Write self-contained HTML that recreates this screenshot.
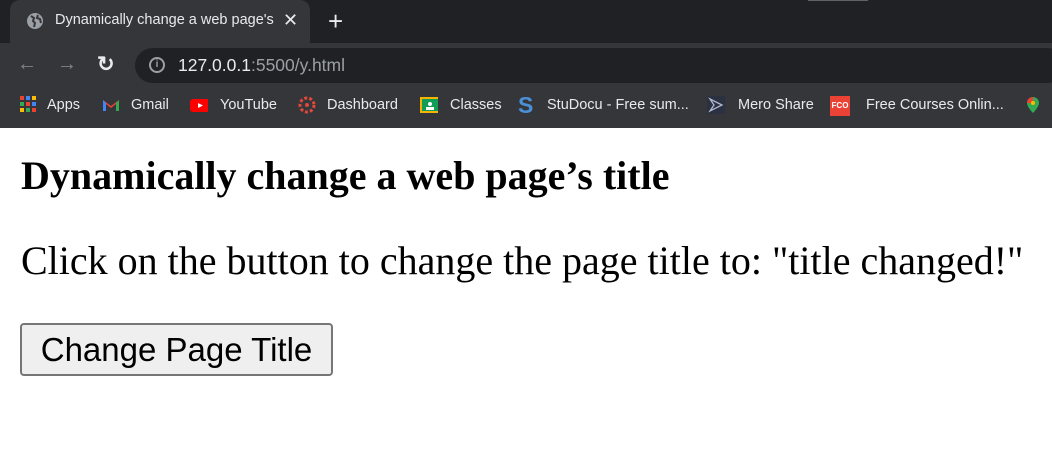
<!DOCTYPE html>
<html><head><meta charset="utf-8"><style>
*{margin:0;padding:0;box-sizing:border-box}
body{width:1052px;height:462px;overflow:hidden;background:#fff;font-family:"Liberation Sans",sans-serif;position:relative}
.top{position:absolute;left:0;top:0;width:1052px;height:43px;background:#202124}
.tab{position:absolute;left:10px;top:0;width:300px;height:43px;background:#35363a;border-radius:10px 10px 0 0}
.tabt{position:absolute;left:55px;top:12px;color:#e8eaed;font-size:14.5px;white-space:nowrap;width:222px;overflow:hidden}
.bar{position:absolute;left:0;top:43px;width:1052px;height:85px;background:#35363a}
.omni{position:absolute;left:135px;top:48px;width:930px;height:35px;background:#202124;border-radius:18px}
.url{position:absolute;left:178px;top:55px;font-size:17.5px;color:#e8eaed}
.url span{color:#9aa0a6}
.bm{position:absolute;top:97px;color:#e8eaed;font-size:14.5px;white-space:nowrap}
.ic{position:absolute;top:96px;width:18px;height:18px}
h1{position:absolute;left:21px;top:152px;font-family:"Liberation Serif",serif;font-size:40px;font-weight:bold;white-space:nowrap;color:#000}
p{position:absolute;left:21px;top:237px;font-family:"Liberation Serif",serif;font-size:40px;white-space:nowrap;color:#000}
button{position:absolute;left:20px;top:323px;width:313px;height:53px;background:#efefef;border:2px solid #767676;border-radius:4px;font-family:"Liberation Sans",sans-serif;font-size:33px;color:#000}
</style></head><body>
<div class="top"></div>
<div class="tab"></div>
<svg style="position:absolute;left:26px;top:12px" width="18" height="18" viewBox="0 0 18 18"><circle cx="9" cy="9" r="8" fill="#9aa0a6"/><path d="M5 4l3 2-1 3 2 2-1 4M12 3l-1 3 3 1 1 4" stroke="#35363a" stroke-width="2" fill="none"/></svg>
<div class="tabt">Dynamically change a web page's title</div>
<div style="position:absolute;left:283px;top:10px;color:#e8eaed;font-size:18px">✕</div>
<div style="position:absolute;left:328px;top:6px;color:#e8eaed;font-size:26px;font-weight:300">+</div>
<div style="position:absolute;left:808px;top:0;width:60px;height:1px;background:#5f6368"></div>
<div class="bar"></div>
<div class="omni"></div>
<div style="position:absolute;left:17px;top:53px;color:#80868b;font-size:20px">←</div>
<div style="position:absolute;left:57px;top:53px;color:#80868b;font-size:20px">→</div>
<div style="position:absolute;left:97px;top:52px;color:#e8eaed;font-size:21px;font-weight:bold">↻</div>
<div style="position:absolute;left:149px;top:57px;width:16px;height:16px;border:2px solid #9aa0a6;border-radius:50%;color:#9aa0a6;font-size:10px;text-align:center;line-height:12px;font-weight:bold">i</div>
<div class="url">127.0.0.1<span>:5500/y.html</span></div>
<svg class="ic" style="left:20px" viewBox="0 0 18 18"><g><rect x="0" y="0" width="4" height="4" fill="#ea4335"/><rect x="6" y="0" width="4" height="4" fill="#4285f4"/><rect x="12" y="0" width="4" height="4" fill="#fbbc04"/><rect x="0" y="6" width="4" height="4" fill="#34a853"/><rect x="6" y="6" width="4" height="4" fill="#ea4335"/><rect x="12" y="6" width="4" height="4" fill="#4285f4"/><rect x="0" y="12" width="4" height="4" fill="#fbbc04"/><rect x="6" y="12" width="4" height="4" fill="#34a853"/><rect x="12" y="12" width="4" height="4" fill="#ea4335"/></g></svg>
<div class="bm" style="left:47px">Apps</div>
<svg class="ic" style="left:102px" viewBox="0 0 18 18"><path d="M1 4v11h3V8l5 4 5-4v7h3V4l-8 6z" fill="#ea4335"/><path d="M1 4v11h3V7z" fill="#4285f4"/><path d="M14 7v8h3V4z" fill="#34a853"/></svg>
<div class="bm" style="left:131px">Gmail</div>
<svg class="ic" style="left:190px" viewBox="0 0 18 18"><rect x="0" y="3" width="20" height="13" rx="3" fill="#f00"/><path d="M8 7l5 2.5-5 2.5z" fill="#fff"/></svg>
<div class="bm" style="left:220px">YouTube</div>
<svg class="ic" style="left:298px" viewBox="0 0 18 18"><circle cx="9" cy="9" r="7" fill="none" stroke="#e0483b" stroke-width="3" stroke-dasharray="3 2"/><circle cx="9" cy="9" r="2" fill="#e0483b"/></svg>
<div class="bm" style="left:327px">Dashboard</div>
<svg class="ic" style="left:420px" viewBox="0 0 18 18"><rect x="0" y="1" width="20" height="16" fill="#f4b400"/><rect x="2" y="3" width="16" height="12" fill="#0f9d58"/><circle cx="10" cy="8" r="2" fill="#fff"/><rect x="6" y="11" width="8" height="3" fill="#fff"/></svg>
<div class="bm" style="left:450px">Classes</div>
<div style="position:absolute;left:518px;top:92px;color:#4a90d9;font-size:23px;font-weight:bold">S</div>
<div class="bm" style="left:547px">StuDocu - Free sum...</div>
<svg class="ic" style="left:707px;background:#2c3142" viewBox="0 0 18 18"><path d="M3 3l12 6-12 6 4-6z" fill="none" stroke="#b0b8d0" stroke-width="1.3"/></svg>
<div class="bm" style="left:738px">Mero Share</div>
<div style="position:absolute;left:830px;top:96px;width:20px;height:20px;background:#ea4335;color:#fff;font-size:8px;font-weight:bold;line-height:20px;text-align:center">FCO</div>
<div class="bm" style="left:866px">Free Courses Onlin...</div>
<svg class="ic" style="left:1024px" viewBox="0 0 18 18"><path d="M9 1a6 6 0 0 0-6 6c0 4 6 10 6 10s6-6 6-10a6 6 0 0 0-6-6z" fill="#34a853"/><path d="M3 7a6 6 0 0 1 6-6l0 6z" fill="#ea4335"/><circle cx="9" cy="7" r="2" fill="#fbbc04"/></svg>
<h1>Dynamically change a web page’s title</h1>
<p>Click on the button to change the page title to: "title changed!"</p>
<button>Change Page Title</button>
</body></html>
